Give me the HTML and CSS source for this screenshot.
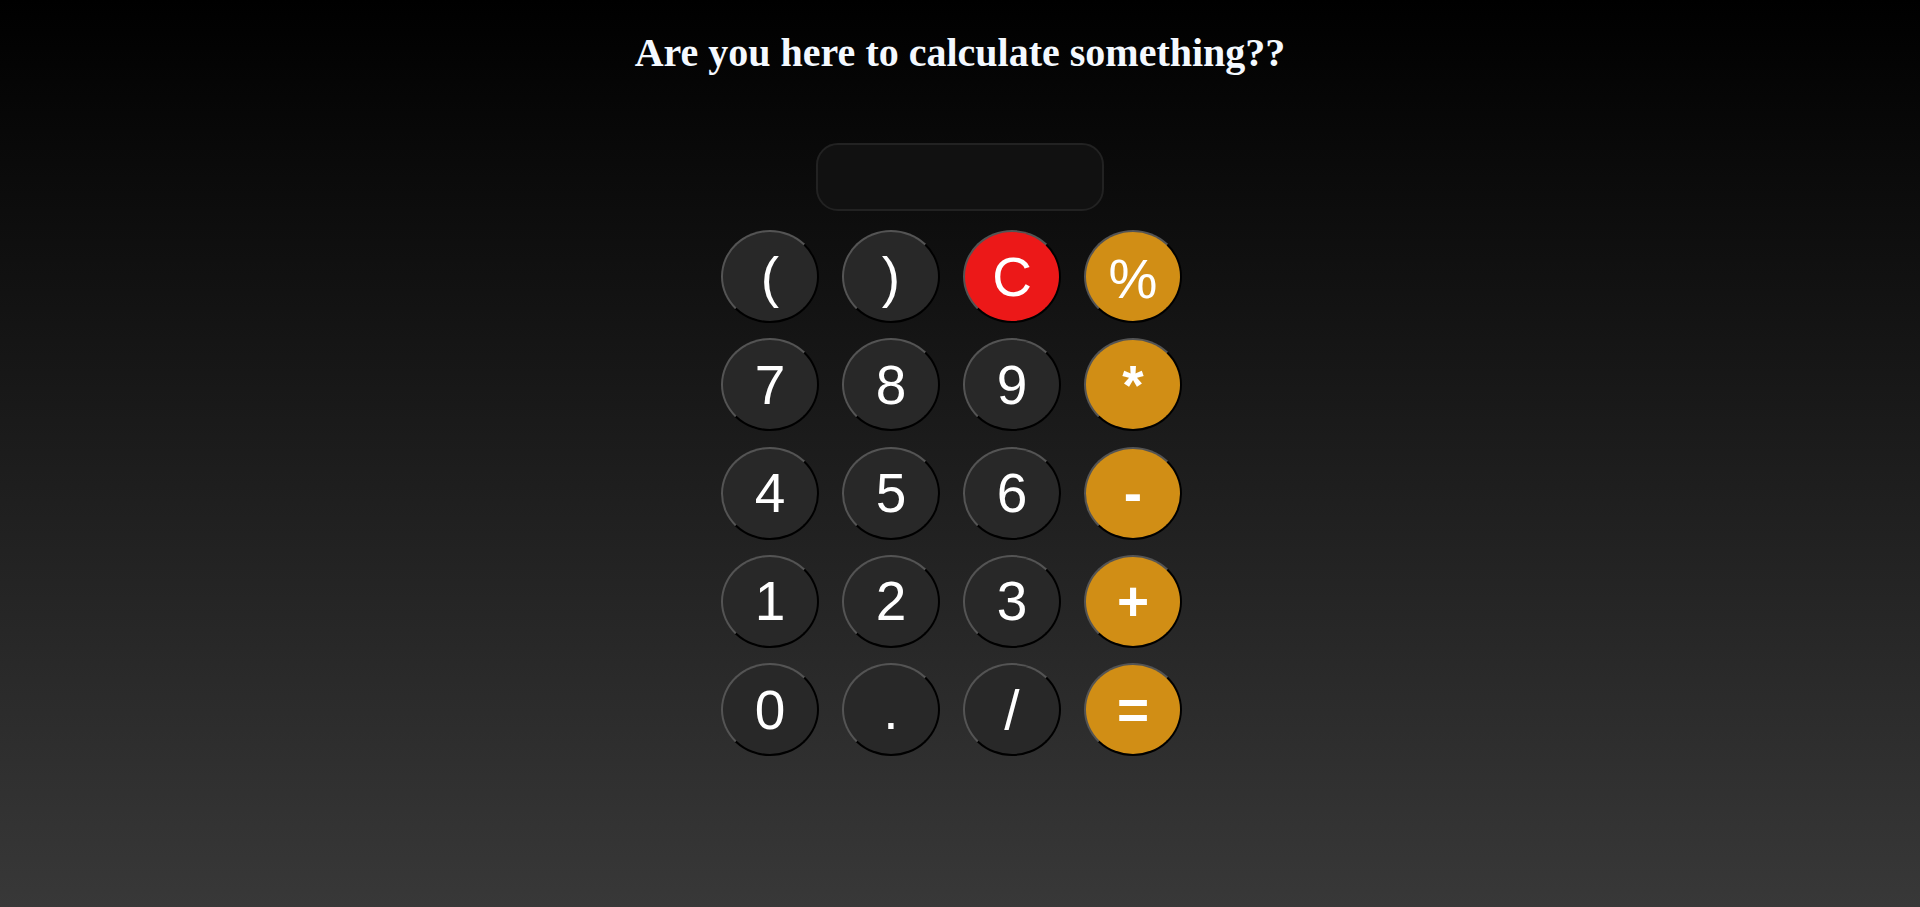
FILE: index.html
```html
<!DOCTYPE html>
<html lang="en">
<head>
<meta charset="utf-8">
<title>Calculator</title>
<link rel="stylesheet" href="styles.css">
</head>
<body>
<h1 class="title">Are you here to calculate something??</h1>
<main class="calc">
  <div class="display"></div>
  <div class="keys">
    <button class="key">(</button>
    <button class="key">)</button>
    <button class="key key-clear">C</button>
    <button class="key key-op key-light">%</button>
    <button class="key">7</button>
    <button class="key">8</button>
    <button class="key">9</button>
    <button class="key key-op">*</button>
    <button class="key">4</button>
    <button class="key">5</button>
    <button class="key">6</button>
    <button class="key key-op">-</button>
    <button class="key">1</button>
    <button class="key">2</button>
    <button class="key">3</button>
    <button class="key key-op">+</button>
    <button class="key">0</button>
    <button class="key">.</button>
    <button class="key">/</button>
    <button class="key key-op">=</button>
  </div>
</main>
</body>
</html>
```
FILE: styles.css
```css
html, body {
  margin: 0;
  padding: 0;
}
body {
  min-height: 907px;
  background: linear-gradient(to bottom, #000000 0%, #383838 100%);
  font-family: "Liberation Sans", Arial, sans-serif;
}
.title {
  margin: 30px 0 0;
  font-family: "Liberation Serif", "Times New Roman", serif;
  font-weight: bold;
  font-size: 40px;
  line-height: 46px;
  color: #f4f9ff;
  text-align: center;
}
.calc {
  display: flex;
  flex-direction: column;
  align-items: center;
  padding-top: 67px;
}
.display {
  box-sizing: border-box;
  width: 288px;
  height: 68px;
  background: #111111;
  border: 2px solid #222222;
  border-radius: 22px;
}
.keys {
  margin-top: 19px;
  padding-right: 17px;
  display: grid;
  grid-template-columns: repeat(4, 98px);
  grid-auto-rows: 93px;
  column-gap: 23px;
  row-gap: 15.25px;
}
.key {
  box-sizing: border-box;
  width: 98px;
  height: 93px;
  margin: 0;
  padding: 0;
  border: 2px outset #000000;
  border-radius: 50%;
  background: #282828;
  color: #ffffff;
  font-family: "Liberation Sans", Arial, sans-serif;
  font-size: 55px;
  line-height: normal;
  cursor: pointer;
}
.key-op {
  background: #d18e15;
  font-weight: bold;
}
.key-light {
  font-weight: normal;
  padding-top: 4px;
}
.key-clear {
  background: #ec1818;
}
```
